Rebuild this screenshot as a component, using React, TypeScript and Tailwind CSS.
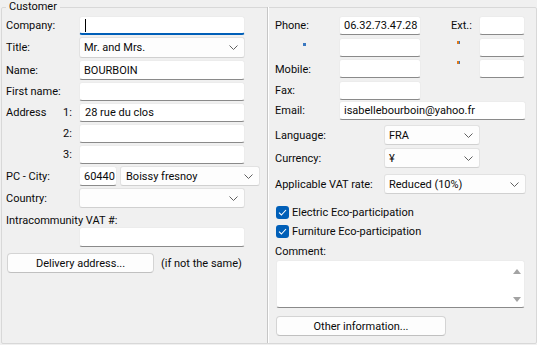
import React from "react";

function Chevron() {
  return (
    <svg width="9" height="5" viewBox="0 0 9 5" className="shrink-0">
      <path d="M0.5 0.5 L4.5 4.5 L8.5 0.5" stroke="#606060" strokeWidth="1" fill="none" />
    </svg>
  );
}

function L({ className = "", children }: { className?: string; children?: React.ReactNode }) {
  return <span className={"pt-[1px] " + className}>{children}</span>;
}

function TextBox({ className = "", value = "", focused = false }: { className?: string; value?: string; focused?: boolean }) {
  return (
    <div
      className={
        "bg-white border border-[#ececec] rounded-[3px] flex items-center pl-[4px] overflow-hidden whitespace-nowrap " +
        (focused ? "border-b-2 border-b-[#005fb8] " : "border-b-[#8a8a8a] ") +
        className
      }
    >
      {focused ? <span className="w-[1px] h-[13px] bg-black ml-[1px]" /> : <L>{value}</L>}
    </div>
  );
}

function Combo({ className = "", value = "" }: { className?: string; value?: string }) {
  return (
    <div
      className={
        "bg-[#fdfdfd] border border-[#e2e2e2] border-b-[#d0d0d0] rounded-[3px] flex items-center justify-between pl-[4px] pr-[6px] whitespace-nowrap " +
        className
      }
    >
      <L>{value}</L>
      <Chevron />
    </div>
  );
}

function Button({ className = "", label }: { className?: string; label: string }) {
  return (
    <div
      className={
        "bg-[#fdfdfd] border border-[#d4d4d4] border-b-[#c0c0c0] rounded-[4px] flex items-center justify-center " + className
      }
    >
      <L>{label}</L>
    </div>
  );
}

function Check({ label, className = "" }: { label: string; className?: string }) {
  return (
    <div className={"flex items-center h-[14px] " + className}>
      <div className="ml-[1px] w-[13px] h-[13px] rounded-[3px] bg-[#005fb8] flex items-center justify-center">
        <svg width="9" height="7" viewBox="0 0 9 7">
          <path d="M1 3.6 L3.4 6 L8 1" stroke="white" strokeWidth="1.1" fill="none" />
        </svg>
      </div>
      <L className="ml-[3px]">{label}</L>
    </div>
  );
}

function Dot({ color, className = "" }: { color: string; className?: string }) {
  return (
    <div className={"flex w-[3px] h-[3px] " + className}>
      <div className={"w-[2px] h-[3px] " + color} />
      <div className="w-[1px] h-[3px] bg-[#3a78c0]" />
    </div>
  );
}

export default function App() {
  return (
    <div className="w-[537px] h-[345px] bg-[#f0f0f0] text-[11px] leading-[14px] text-[#0a0a0a] font-['Roboto',sans-serif] overflow-hidden">
      <fieldset className="ml-[1px] w-[536px] h-[344px] border border-[#d8d8d8] rounded-[2px]">
        <legend className="ml-[4px] px-[3px] leading-[14px]">
          <L>Customer</L>
        </legend>
        <div className="flex h-full">
          {/* Left column */}
          <div className="w-[265px] pl-[4px] flex flex-col">
            <div className="flex items-center h-[19px] mt-[2px]">
              <L className="w-[73px]">Company:</L>
              <TextBox focused className="w-[166px] h-[19px]" />
            </div>
            <div className="flex items-center h-[21px] mt-[2px]">
              <L className="w-[73px]">Title:</L>
              <Combo value="Mr. and Mrs." className="w-[166px] h-[21px]" />
            </div>
            <div className="flex items-center h-[20px] mt-[2px]">
              <L className="w-[73px]">Name:</L>
              <TextBox value="BOURBOIN" className="w-[166px] h-[20px]" />
            </div>
            <div className="flex items-center h-[19px] mt-[2px]">
              <L className="w-[73px]">First name:</L>
              <TextBox className="w-[166px] h-[19px]" />
            </div>
            <div className="flex items-center h-[19px] mt-[2px]">
              <span className="w-[73px] flex">
                <L className="w-[57px]">Address</L>
                <L>1:</L>
              </span>
              <TextBox value="28 rue du clos" className="w-[166px] h-[19px] pl-[5px]" />
            </div>
            <div className="flex items-center h-[19px] mt-[2px]">
              <L className="w-[73px] pl-[57px]">2:</L>
              <TextBox className="w-[166px] h-[19px]" />
            </div>
            <div className="flex items-center h-[19px] mt-[2px]">
              <L className="w-[73px] pl-[57px]">3:</L>
              <TextBox className="w-[166px] h-[19px]" />
            </div>
            <div className="flex items-center h-[20px] mt-[2px]">
              <L className="w-[73px]">PC - City:</L>
              <TextBox value="60440" className="w-[38px] h-[20px] pl-[3px]" />
              <Combo value="Boissy fresnoy" className="ml-[3px] w-[140px] h-[20px] pl-[5px]" />
            </div>
            <div className="flex items-center h-[20px] mt-[2px]">
              <L className="w-[73px]">Country:</L>
              <Combo value="" className="w-[166px] h-[20px]" />
            </div>
            <div className="flex items-center h-[14px] mt-[5px]">
              <L>Intracommunity VAT #:</L>
            </div>
            <div className="flex items-center h-[20px]">
              <TextBox className="ml-[73px] w-[166px] h-[20px]" />
            </div>
            <div className="flex items-center h-[20px] mt-[6px]">
              <Button label="Delivery address..." className="ml-[1px] w-[147px] h-[20px]" />
              <L className="ml-[7px]">(if not the same)</L>
            </div>
          </div>

          {/* Divider */}
          <div className="flex -mt-[7px]">
            <div className="w-[1px] bg-[#c6c6c6]" />
            <div className="w-[1px] bg-white" />
          </div>

          {/* Right column */}
          <div className="w-[266px] pl-[6px] flex flex-col">
            <div className="flex items-center h-[19px] mt-[2px]">
              <L className="w-[64px]">Phone:</L>
              <TextBox value="06.32.73.47.28" className="w-[82px] h-[19px]" />
              <L className="ml-[30px] w-[28px]">Ext.:</L>
              <TextBox className="w-[46px] h-[19px]" />
            </div>
            <div className="flex h-[19px] mt-[3px]">
              <div className="w-[64px] pl-[28px]">
                <Dot color="bg-[#3a78c0]" className="mt-[5px]" />
              </div>
              <TextBox className="w-[82px] h-[19px]" />
              <div className="w-[58px] pl-[36px]">
                <Dot color="bg-[#e07a1a]" className="mt-[3px]" />
              </div>
              <TextBox className="w-[46px] h-[19px]" />
            </div>
            <div className="flex items-center h-[19px] mt-[2px]">
              <L className="w-[64px] pt-[2px]">Mobile:</L>
              <TextBox className="w-[82px] h-[19px]" />
              <div className="w-[58px] pl-[36px] self-start">
                <Dot color="bg-[#e07a1a]" className="mt-[2px]" />
              </div>
              <TextBox className="w-[46px] h-[19px]" />
            </div>
            <div className="flex items-center h-[19px] mt-[3px]">
              <L className="w-[64px]">Fax:</L>
              <TextBox className="w-[82px] h-[19px]" />
            </div>
            <div className="flex items-center h-[19px] mt-[1px]">
              <L className="w-[64px]">Email:</L>
              <TextBox value="isabellebourboin@yahoo.fr" className="w-[187px] h-[19px]" />
            </div>
            <div className="flex items-center h-[20px] mt-[5px]">
              <L className="w-[109px]">Language:</L>
              <Combo value="FRA" className="w-[96px] h-[20px]" />
            </div>
            <div className="flex items-center h-[20px] mt-[3px]">
              <L className="w-[109px]">Currency:</L>
              <Combo value="¥" className="w-[96px] h-[20px]" />
            </div>
            <div className="flex items-center h-[20px] mt-[6px]">
              <L className="w-[109px]">Applicable VAT rate:</L>
              <Combo value="Reduced (10%)" className="w-[142px] h-[20px]" />
            </div>
            <Check label="Electric Eco-participation" className="mt-[11px]" />
            <Check label="Furniture Eco-participation" className="mt-[5px]" />
            <div className="flex items-center h-[14px] mt-[6px]">
              <L>Comment:</L>
            </div>
            <div className="mt-[2px] ml-[1px] w-[249px] h-[48px] bg-white border border-[#ececec] border-b-[#8a8a8a] rounded-[3px] flex justify-end">
              <div className="w-[15px] flex flex-col items-center justify-between pt-[8px] pb-[5px]">
                <svg width="8" height="5" viewBox="0 0 8 5">
                  <path d="M0 5 L4 0 L8 5 Z" fill="#a3a3a3" />
                </svg>
                <svg width="8" height="5" viewBox="0 0 8 5">
                  <path d="M0 0 L4 5 L8 0 Z" fill="#a3a3a3" />
                </svg>
              </div>
            </div>
            <Button label="Other information..." className="mt-[8px] ml-[1px] w-[170px] h-[20px]" />
          </div>
        </div>
      </fieldset>
    </div>
  );
}
